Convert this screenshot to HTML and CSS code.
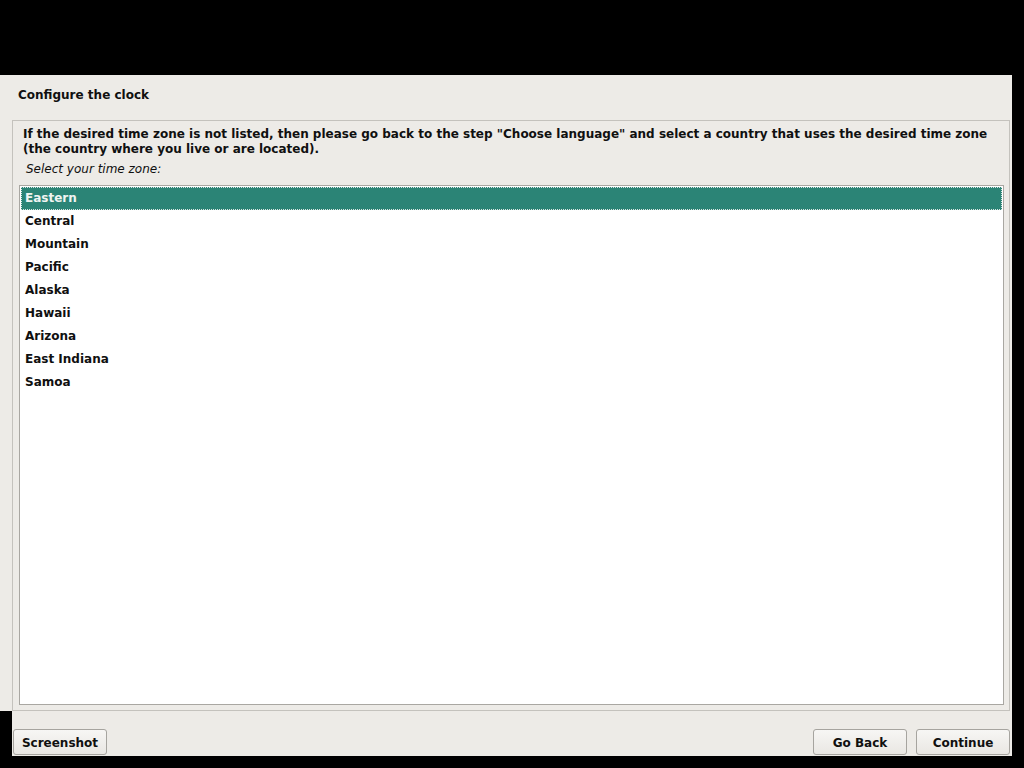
FILE: index.html
```html
<!DOCTYPE html>
<html>
<head>
<meta charset="utf-8">
<link rel="stylesheet" href="styles.css">
</head>
<body>
<div class="screen">
  <div class="main">
    <div class="header">Configure the clock</div>
    <div class="frame">
      <p class="info">If the desired time zone is not listed, then please go back to the step "Choose language" and select a country that uses the desired time zone (the country where you live or are located).</p>
      <p class="prompt">Select your time zone:</p>
      <ul class="list">
        <li class="row selected">Eastern</li>
        <li class="row">Central</li>
        <li class="row">Mountain</li>
        <li class="row">Pacific</li>
        <li class="row">Alaska</li>
        <li class="row">Hawaii</li>
        <li class="row">Arizona</li>
        <li class="row">East Indiana</li>
        <li class="row">Samoa</li>
      </ul>
    </div>
  </div>
  <div class="footer">
    <button class="btn btn-shot">Screenshot</button>
    <div class="spacer"></div>
    <button class="btn">Go Back</button>
    <button class="btn">Continue</button>
  </div>
</div>
</body>
</html>
```
FILE: styles.css
```css
html, body {
  margin: 0;
  padding: 0;
  background: #000;
  width: 1024px;
  height: 768px;
  overflow: hidden;
  font-family: "DejaVu Sans", sans-serif;
  font-size: 12px;
  color: #101010;
}
.screen {
  padding-top: 75px;
}
.main {
  width: 1012px;
  height: 636px;
  background: #edebe7;
  display: flex;
  flex-direction: column;
  box-sizing: border-box;
}
.header {
  height: 45px;
  box-sizing: border-box;
  padding: 12px 0 0 18px;
  font-weight: bold;
  line-height: 16px;
}
.frame {
  flex: 1;
  margin-left: 12px;
  margin-right: 2px;
  border: 1px solid #c4c2bd;
  display: flex;
  flex-direction: column;
  padding: 6px 5px 5px 6px;
  min-height: 0;
}
.info {
  margin: 0 0 0 4px;
  font-weight: bold;
  line-height: 15px;
}
.prompt {
  margin: 5px 0 0 7px;
  font-style: italic;
  line-height: 15px;
}
.list {
  list-style: none;
  margin: 8px 0 0 0;
  padding: 1px;
  flex: 1;
  background: #fff;
  border: 1px solid #a9a7a2;
}
.row {
  height: 23px;
  line-height: 23px;
  padding-left: 4px;
  font-weight: bold;
  box-sizing: border-box;
}
.row.selected {
  background: #2b8476;
  color: #f0f4f2;
  outline: 1px dotted #d8e6e2;
  outline-offset: -1px;
}
.footer {
  margin-left: 12px;
  width: 1000px;
  height: 45px;
  background: #edebe7;
  display: flex;
  align-items: flex-end;
  padding: 0 2px 1px 1px;
  box-sizing: border-box;
  gap: 9px;
}
.spacer {
  flex: 1;
}
.btn {
  width: 94px;
  height: 26px;
  font-family: "DejaVu Sans", sans-serif;
  font-size: 12px;
  font-weight: bold;
  color: #101010;
  background: linear-gradient(#f7f6f4, #e9e7e3);
  border: 1px solid #a6a49f;
  border-radius: 3px;
  padding: 2px 0 0 0;
}
```
